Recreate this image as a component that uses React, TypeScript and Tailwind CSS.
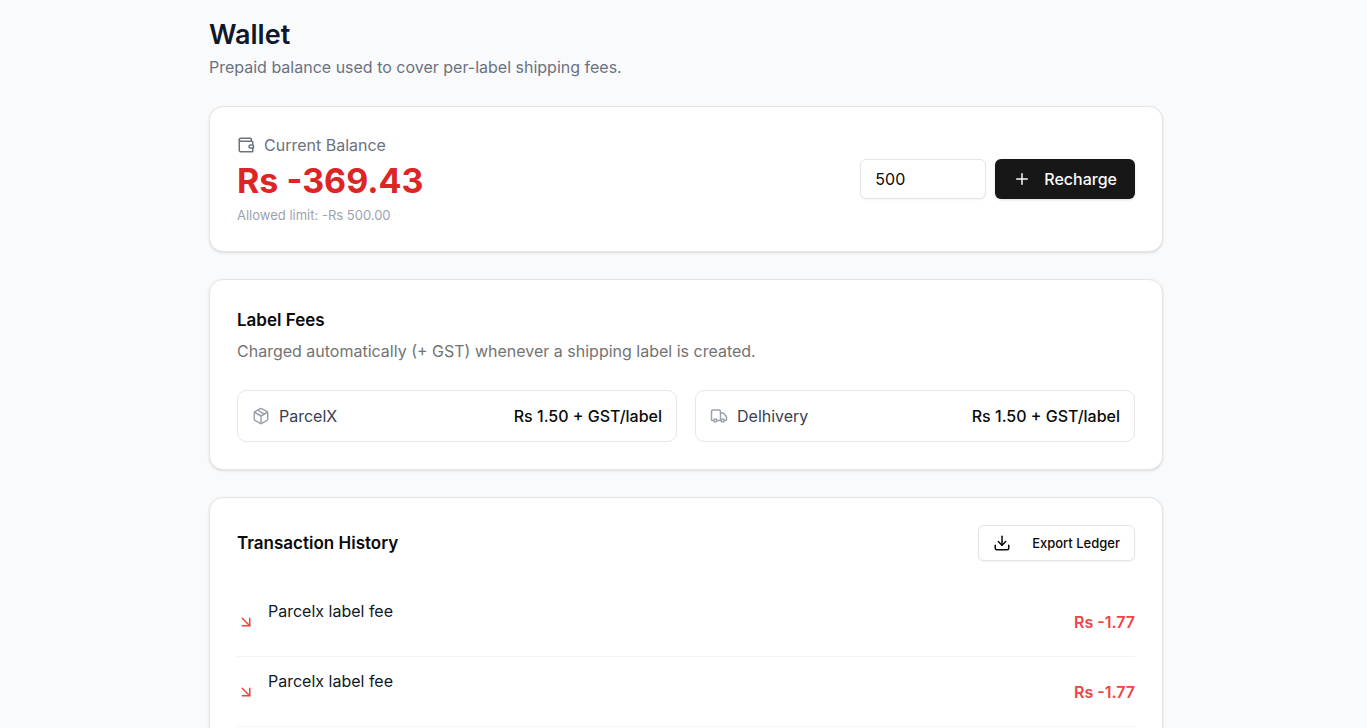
import React from "react";
import { ArrowDownRight, Download, Package, Plus, Truck, Wallet } from "lucide-react";

const fees = [
  { name: "ParcelX", price: "Rs 1.50 + GST/label", Icon: Package },
  { name: "Delhivery", price: "Rs 1.50 + GST/label", Icon: Truck },
];

const transactions = [
  { id: 1, title: "Parcelx label fee", amount: "Rs -1.77" },
  { id: 2, title: "Parcelx label fee", amount: "Rs -1.77" },
];

function Card({ children }: { children: React.ReactNode }) {
  return (
    <section className="rounded-[14px] border border-[#e5e5e5] bg-white p-[27px] shadow-[0_1px_3px_0_rgb(0_0_0/0.1),0_1px_2px_-1px_rgb(0_0_0/0.1)]">
      {children}
    </section>
  );
}

export default function App() {
  return (
    <div className="min-h-screen bg-[#f9fafc] pl-[5px] font-['Inter',sans-serif] text-[16px] leading-[22px] text-[#0a0a0a]">
      <main className="mx-auto flex w-full max-w-[954px] flex-col gap-[27px] pt-[14px]">
        <header>
          <h1 className="text-[27px] leading-[42px] font-semibold text-[#0f172a]">Wallet</h1>
          <p className="mb-[1px] text-[#6b7280]">Prepaid balance used to cover per-label shipping fees.</p>
        </header>

        <Card>
          <div className="flex items-center justify-between gap-4">
            <div>
              <p className="flex items-center gap-[9px] text-[#6b7280]">
                <Wallet className="size-[18px]" />
                Current Balance
              </p>
              <p className="mt-[5px] text-[34px] leading-[40px] font-bold text-[#dc2626]">Rs -369.43</p>
              <p className="mt-[5px] text-[13px] leading-[18px] text-[#9ca3af]">Allowed limit: -Rs 500.00</p>
            </div>
            <form className="flex items-center gap-[9px]" onSubmit={(e) => e.preventDefault()}>
              <input
                aria-label="Recharge amount"
                inputMode="numeric"
                defaultValue="500"
                className="h-[40px] w-[126px] rounded-[6px] border border-[#e5e5e5] bg-white px-[14px] shadow-xs outline-none"
              />
              <button
                type="submit"
                className="flex h-[40px] items-center gap-[13px] rounded-[6px] bg-[#171717] px-[18px] font-medium text-[#fafafa] shadow-sm"
              >
                <Plus className="size-[18px]" />
                Recharge
              </button>
            </form>
          </div>
        </Card>

        <Card>
          <h2 className="text-[17px] leading-[27px] font-semibold">Label Fees</h2>
          <p className="mt-[6px] text-[#737373]">
            Charged automatically (+ GST) whenever a shipping label is created.
          </p>
          <ul className="mt-[28px] grid grid-cols-2 gap-[18px]">
            {fees.map(({ name, price, Icon }) => (
              <li
                key={name}
                className="flex items-center justify-between rounded-[9px] border border-[#e5e7eb] px-[14px] py-[14px]"
              >
                <span className="flex items-center gap-[9px] text-[#374151]">
                  <Icon className="size-[18px] text-[#9ca3af]" />
                  {name}
                </span>
                <span className="font-medium">{price}</span>
              </li>
            ))}
          </ul>
        </Card>

        <Card>
          <div className="flex items-center justify-between">
            <h2 className="text-[17px] leading-[27px] font-semibold">Transaction History</h2>
            <button
              type="button"
              className="flex h-[36px] items-center gap-[21px] rounded-[6px] border border-[#e5e5e5] bg-white px-[14px] text-[13px] font-medium shadow-xs"
            >
              <Download className="size-[18px]" />
              Export Ledger
            </button>
          </div>
          <ul className="mt-[26px]">
            {transactions.map(({ id, title, amount }) => (
              <li key={id} className="flex h-[70px] items-center justify-between border-b border-[#f3f4f6]">
                <div className="flex items-center gap-[13px]">
                  <ArrowDownRight className="size-[18px] text-[#ef4444]" />
                  <p className="h-[43px] text-[#111827]">{title}</p>
                </div>
                <span className="font-semibold text-[#ef4444]">{amount}</span>
              </li>
            ))}
          </ul>
        </Card>
      </main>
    </div>
  );
}
